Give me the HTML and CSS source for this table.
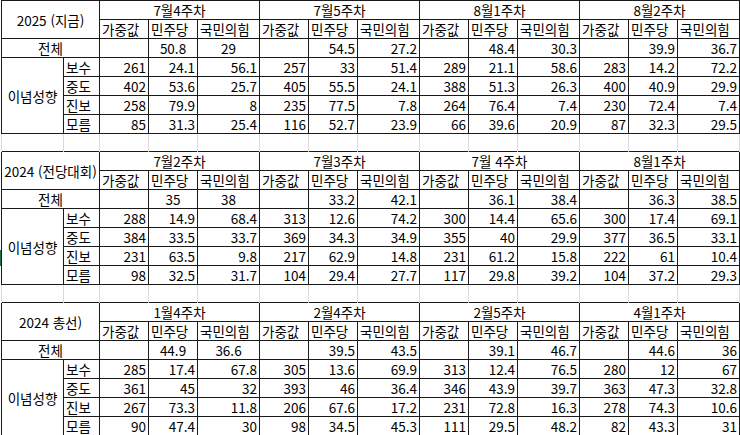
FILE: index.html
```html
<!DOCTYPE html>
<html lang="ko">
<head>
<meta charset="utf-8">
<title>이념성향별 지지율</title>
<link rel="stylesheet" href="styles.css">
</head>
<body>
<div class="sheet">
  <div class="edge"><div class="active-mark"></div></div>
  <table class="grid">
    <colgroup>
      <col class="w-a"><col class="w-b">
      <col class="w-n"><col class="w-n"><col class="w-w">
      <col class="w-n"><col class="w-n"><col class="w-w">
      <col class="w-n"><col class="w-n"><col class="w-w">
      <col class="w-n"><col class="w-n"><col class="w-w">
    </colgroup>
    <tbody>
      <!-- Block 1 -->
      <tr>
        <th rowspan="2" colspan="2" class="title">2025 (지금)</th>
        <th colspan="3" class="week">7월4주차</th>
        <th colspan="3" class="week">7월5주차</th>
        <th colspan="3" class="week">8월1주차</th>
        <th colspan="3" class="week">8월2주차</th>
      </tr>
      <tr>
        <th class="sub">가중값</th><th class="sub">민주당</th><th class="sub">국민의힘</th>
        <th class="sub">가중값</th><th class="sub">민주당</th><th class="sub">국민의힘</th>
        <th class="sub">가중값</th><th class="sub">민주당</th><th class="sub">국민의힘</th>
        <th class="sub">가중값</th><th class="sub">민주당</th><th class="sub">국민의힘</th>
      </tr>
      <tr>
        <td colspan="2" class="label">전체</td>
        <td></td><td class="c">50.8</td><td class="c">29</td>
        <td></td><td class="n">54.5</td><td class="n">27.2</td>
        <td></td><td class="n">48.4</td><td class="n">30.3</td>
        <td></td><td class="n">39.9</td><td class="n">36.7</td>
      </tr>
      <tr>
        <td rowspan="4" class="ideo">이념성향</td><td class="cat">보수</td>
        <td class="n">261</td><td class="n">24.1</td><td class="n">56.1</td>
        <td class="n">257</td><td class="n">33</td><td class="n">51.4</td>
        <td class="n">289</td><td class="n">21.1</td><td class="n">58.6</td>
        <td class="n">283</td><td class="n">14.2</td><td class="n">72.2</td>
      </tr>
      <tr>
        <td class="cat">중도</td>
        <td class="n">402</td><td class="n">53.6</td><td class="n">25.7</td>
        <td class="n">405</td><td class="n">55.5</td><td class="n">24.1</td>
        <td class="n">388</td><td class="n">51.3</td><td class="n">26.3</td>
        <td class="n">400</td><td class="n">40.9</td><td class="n">29.9</td>
      </tr>
      <tr>
        <td class="cat">진보</td>
        <td class="n">258</td><td class="n">79.9</td><td class="n">8</td>
        <td class="n">235</td><td class="n">77.5</td><td class="n">7.8</td>
        <td class="n">264</td><td class="n">76.4</td><td class="n">7.4</td>
        <td class="n">230</td><td class="n">72.4</td><td class="n">7.4</td>
      </tr>
      <tr>
        <td class="cat">모름</td>
        <td class="n">85</td><td class="n">31.3</td><td class="n">25.4</td>
        <td class="n">116</td><td class="n">52.7</td><td class="n">23.9</td>
        <td class="n">66</td><td class="n">39.6</td><td class="n">20.9</td>
        <td class="n">87</td><td class="n">32.3</td><td class="n">29.5</td>
      </tr>
      <tr class="gap">
        <td></td><td></td><td></td><td></td><td></td><td></td><td></td>
        <td></td><td></td><td></td><td></td><td></td><td></td><td></td>
      </tr>

      <!-- Block 2 -->
      <tr>
        <th rowspan="2" colspan="2" class="title">2024 (전당대회)</th>
        <th colspan="3" class="week">7월2주차</th>
        <th colspan="3" class="week">7월3주차</th>
        <th colspan="3" class="week">7월 4주차</th>
        <th colspan="3" class="week">8월1주차</th>
      </tr>
      <tr>
        <th class="sub">가중값</th><th class="sub">민주당</th><th class="sub">국민의힘</th>
        <th class="sub">가중값</th><th class="sub">민주당</th><th class="sub">국민의힘</th>
        <th class="sub">가중값</th><th class="sub">민주당</th><th class="sub">국민의힘</th>
        <th class="sub">가중값</th><th class="sub">민주당</th><th class="sub">국민의힘</th>
      </tr>
      <tr>
        <td colspan="2" class="label">전체</td>
        <td></td><td class="c">35</td><td class="c">38</td>
        <td></td><td class="n">33.2</td><td class="n">42.1</td>
        <td></td><td class="n">36.1</td><td class="n">38.4</td>
        <td></td><td class="n">36.3</td><td class="n">38.5</td>
      </tr>
      <tr>
        <td rowspan="4" class="ideo">이념성향</td><td class="cat">보수</td>
        <td class="n">288</td><td class="n">14.9</td><td class="n">68.4</td>
        <td class="n">313</td><td class="n">12.6</td><td class="n">74.2</td>
        <td class="n">300</td><td class="n">14.4</td><td class="n">65.6</td>
        <td class="n">300</td><td class="n">17.4</td><td class="n">69.1</td>
      </tr>
      <tr>
        <td class="cat">중도</td>
        <td class="n">384</td><td class="n">33.5</td><td class="n">33.7</td>
        <td class="n">369</td><td class="n">34.3</td><td class="n">34.9</td>
        <td class="n">355</td><td class="n">40</td><td class="n">29.9</td>
        <td class="n">377</td><td class="n">36.5</td><td class="n">33.1</td>
      </tr>
      <tr>
        <td class="cat">진보</td>
        <td class="n">231</td><td class="n">63.5</td><td class="n">9.8</td>
        <td class="n">217</td><td class="n">62.9</td><td class="n">14.8</td>
        <td class="n">231</td><td class="n">61.2</td><td class="n">15.8</td>
        <td class="n">222</td><td class="n">61</td><td class="n">10.4</td>
      </tr>
      <tr>
        <td class="cat">모름</td>
        <td class="n">98</td><td class="n">32.5</td><td class="n">31.7</td>
        <td class="n">104</td><td class="n">29.4</td><td class="n">27.7</td>
        <td class="n">117</td><td class="n">29.8</td><td class="n">39.2</td>
        <td class="n">104</td><td class="n">37.2</td><td class="n">29.3</td>
      </tr>
      <tr class="gap">
        <td></td><td></td><td></td><td></td><td></td><td></td><td></td>
        <td></td><td></td><td></td><td></td><td></td><td></td><td></td>
      </tr>

      <!-- Block 3 -->
      <tr>
        <th rowspan="2" colspan="2" class="title">2024 총선)</th>
        <th colspan="3" class="week">1월4주차</th>
        <th colspan="3" class="week">2월4주차</th>
        <th colspan="3" class="week">2월5주차</th>
        <th colspan="3" class="week">4월1주차</th>
      </tr>
      <tr>
        <th class="sub">가중값</th><th class="sub">민주당</th><th class="sub">국민의힘</th>
        <th class="sub">가중값</th><th class="sub">민주당</th><th class="sub">국민의힘</th>
        <th class="sub">가중값</th><th class="sub">민주당</th><th class="sub">국민의힘</th>
        <th class="sub">가중값</th><th class="sub">민주당</th><th class="sub">국민의힘</th>
      </tr>
      <tr>
        <td colspan="2" class="label">전체</td>
        <td></td><td class="c">44.9</td><td class="c">36.6</td>
        <td></td><td class="n">39.5</td><td class="n">43.5</td>
        <td></td><td class="n">39.1</td><td class="n">46.7</td>
        <td></td><td class="n">44.6</td><td class="n">36</td>
      </tr>
      <tr>
        <td rowspan="4" class="ideo">이념성향</td><td class="cat">보수</td>
        <td class="n">285</td><td class="n">17.4</td><td class="n">67.8</td>
        <td class="n">305</td><td class="n">13.6</td><td class="n">69.9</td>
        <td class="n">313</td><td class="n">12.4</td><td class="n">76.5</td>
        <td class="n">280</td><td class="n">12</td><td class="n">67</td>
      </tr>
      <tr>
        <td class="cat">중도</td>
        <td class="n">361</td><td class="n">45</td><td class="n">32</td>
        <td class="n">393</td><td class="n">46</td><td class="n">36.4</td>
        <td class="n">346</td><td class="n">43.9</td><td class="n">39.7</td>
        <td class="n">363</td><td class="n">47.3</td><td class="n">32.8</td>
      </tr>
      <tr>
        <td class="cat">진보</td>
        <td class="n">267</td><td class="n">73.3</td><td class="n">11.8</td>
        <td class="n">206</td><td class="n">67.6</td><td class="n">17.2</td>
        <td class="n">231</td><td class="n">72.8</td><td class="n">16.3</td>
        <td class="n">278</td><td class="n">74.3</td><td class="n">10.6</td>
      </tr>
      <tr>
        <td class="cat">모름</td>
        <td class="n">90</td><td class="n">47.4</td><td class="n">30</td>
        <td class="n">98</td><td class="n">34.5</td><td class="n">45.3</td>
        <td class="n">111</td><td class="n">29.5</td><td class="n">48.2</td>
        <td class="n">82</td><td class="n">43.3</td><td class="n">31</td>
      </tr>
    </tbody>
  </table>
</div>
</body>
</html>
```

FILE: styles.css
```css
html, body {
  margin: 0;
  padding: 0;
  background: #ffffff;
}

body {
  width: 740px;
  height: 435px;
  overflow: hidden;
  font-family: "Noto Sans CJK KR", "Noto Sans", sans-serif;
  color: #000000;
}

.sheet {
  display: flex;
  align-items: flex-start;
}

.edge {
  width: 1px;
  flex: 0 0 1px;
  height: 435px;
}

.active-mark {
  margin-top: 250px;
  width: 1px;
  height: 16px;
  background: #1e7145;
}

.grid {
  border-collapse: collapse;
  table-layout: fixed;
  width: 739px;
  font-size: 13.5px;
}

.w-a { width: 62px; }
.w-b { width: 36px; }
.w-n { width: 49px; }
.w-w { width: 62px; }

.grid tr { height: 19px; }

.grid th,
.grid td {
  border: 1px solid #1a1a1a;
  padding: 1px 2px 0 2px;
  height: 19px;
  line-height: 17px;
  white-space: nowrap;
  overflow: hidden;
  font-weight: 400;
  box-sizing: border-box;
}

.grid .title { text-align: center; padding-left: 1px; padding-right: 1px; }
.grid .week { text-align: center; }
.grid .sub { text-align: left; }
.grid .label { text-align: center; }
.grid .ideo { text-align: center; }
.grid .cat { text-align: left; }
.grid .n { text-align: right; }
.grid .c { text-align: center; }

.grid tr.gap { height: 18px; }

.grid tr.gap td {
  height: 18px;
  border-top: none;
  border-bottom: none;
  border-left: 1px solid #d9d9d9;
  border-right: 1px solid #d9d9d9;
}
```
